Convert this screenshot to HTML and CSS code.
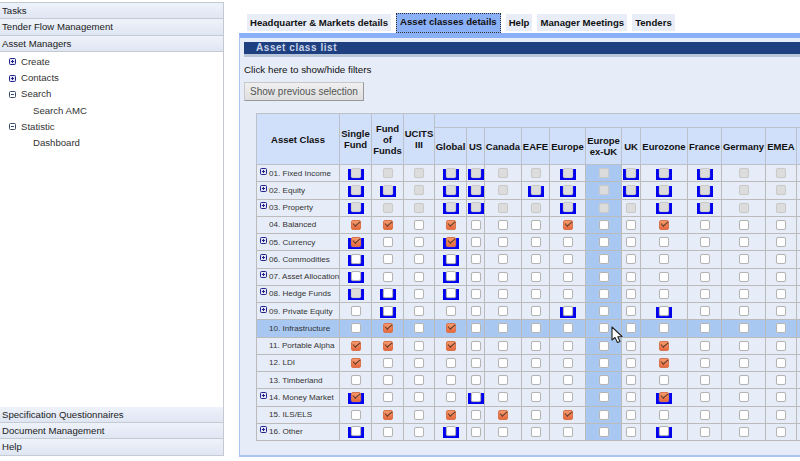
FILE: index.html
```html
<!DOCTYPE html>
<html lang="en">
<head>
<meta charset="utf-8">
<title>Asset class list</title>
<link rel="stylesheet" href="styles.css">
</head>
<body>
<div class="app">
  <aside class="side">
    <div class="acc">Tasks</div>
    <div class="acc">Tender Flow Management</div>
    <div class="acc">Asset Managers</div>
    <ul class="tree">
      <li><i class="tg plus"></i>Create</li>
      <li><i class="tg plus"></i>Contacts</li>
      <li><i class="tg minus"></i>Search</li>
      <li class="sub">Search AMC</li>
      <li><i class="tg minus"></i>Statistic</li>
      <li class="sub">Dashboard</li>
    </ul>
    <div class="acc">Specification Questionnaires</div>
    <div class="acc">Document Management</div>
    <div class="acc">Help</div>
  </aside>
  <main class="main">
    <nav class="tabs">
      <span class="tab">Headquarter &amp; Markets details</span>
      <span class="tab on">Asset classes details</span>
      <span class="tab">Help</span>
      <span class="tab">Manager Meetings</span>
      <span class="tab">Tenders</span>
    </nav>
    <section class="panel">
      <h1 class="title">Asset class list</h1>
      <p class="filters">Click here to show/hide filters</p>
      <button class="btn" type="button">Show previous selection</button>
      <table class="grid">
        <colgroup>
          <col class="w0"><col class="w1"><col class="w2"><col class="w3"><col class="w4"><col class="w5"><col class="w6"><col class="w7"><col class="w8"><col class="w9"><col class="w10"><col class="w11"><col class="w12"><col class="w13"><col class="w14"><col class="w15">
        </colgroup>
        <thead>
          <tr class="h1">
            <th rowspan="2">Asset Class</th>
            <th rowspan="2">Single<br>Fund</th>
            <th rowspan="2">Fund<br>of<br>Funds</th>
            <th rowspan="2">UCITS<br>III</th>
            <th colspan="12" class="group"></th>
          </tr>
          <tr class="h2">
            <th>Global</th><th>US</th><th>Canada</th><th>EAFE</th><th>Europe</th><th>Europe<br>ex-UK</th><th>UK</th><th>Eurozone</th><th>France</th><th>Germany</th><th>EMEA</th><th>Asia<br>Pacific</th>
          </tr>
        </thead>
        <tbody>
          <tr><td class="n"><i class="tg plus"></i>01. Fixed Income</td><td><b class="u"><i class="c d"></i></b></td><td><i class="c d"></i></td><td><i class="c d"></i></td><td><b class="u"><i class="c d"></i></b></td><td><b class="u"><i class="c d"></i></b></td><td><i class="c d"></i></td><td><i class="c d"></i></td><td><b class="u"><i class="c d"></i></b></td><td class="hl"><i class="c d"></i></td><td><b class="u"><i class="c d"></i></b></td><td><b class="u"><i class="c d"></i></b></td><td><b class="u"><i class="c d"></i></b></td><td><i class="c d"></i></td><td><i class="c d"></i></td><td><i class="c d"></i></td></tr>
          <tr><td class="n"><i class="tg plus"></i>02. Equity</td><td><b class="u"><i class="c d"></i></b></td><td><b class="u"><i class="c d"></i></b></td><td><i class="c d"></i></td><td><b class="u"><i class="c d"></i></b></td><td><b class="u"><i class="c d"></i></b></td><td><i class="c d"></i></td><td><b class="u"><i class="c d"></i></b></td><td><b class="u"><i class="c d"></i></b></td><td class="hl"><i class="c d"></i></td><td><b class="u"><i class="c d"></i></b></td><td><b class="u"><i class="c d"></i></b></td><td><b class="u"><i class="c d"></i></b></td><td><i class="c d"></i></td><td><i class="c d"></i></td><td><i class="c d"></i></td></tr>
          <tr><td class="n"><i class="tg plus"></i>03. Property</td><td><b class="u"><i class="c d"></i></b></td><td><i class="c d"></i></td><td><i class="c d"></i></td><td><b class="u"><i class="c d"></i></b></td><td><b class="u"><i class="c d"></i></b></td><td><i class="c d"></i></td><td><i class="c d"></i></td><td><b class="u"><i class="c d"></i></b></td><td class="hl"><i class="c d"></i></td><td><i class="c d"></i></td><td><b class="u"><i class="c d"></i></b></td><td><b class="u"><i class="c d"></i></b></td><td><i class="c d"></i></td><td><i class="c d"></i></td><td><i class="c d"></i></td></tr>
          <tr><td class="n">04. Balanced</td><td><i class="c k"></i></td><td><i class="c k"></i></td><td><i class="c"></i></td><td><i class="c k"></i></td><td><i class="c"></i></td><td><i class="c"></i></td><td><i class="c"></i></td><td><i class="c k"></i></td><td class="hl"><i class="c"></i></td><td><i class="c"></i></td><td><i class="c k"></i></td><td><i class="c"></i></td><td><i class="c"></i></td><td><i class="c"></i></td><td><i class="c"></i></td></tr>
          <tr><td class="n"><i class="tg plus"></i>05. Currency</td><td><b class="u"><i class="c k"></i></b></td><td><i class="c"></i></td><td><i class="c"></i></td><td><b class="u"><i class="c k"></i></b></td><td><i class="c"></i></td><td><i class="c"></i></td><td><i class="c"></i></td><td><i class="c"></i></td><td class="hl"><i class="c"></i></td><td><i class="c"></i></td><td><i class="c"></i></td><td><i class="c"></i></td><td><i class="c"></i></td><td><i class="c"></i></td><td><i class="c"></i></td></tr>
          <tr><td class="n"><i class="tg plus"></i>06. Commodities</td><td><b class="u"><i class="c"></i></b></td><td><i class="c"></i></td><td><i class="c"></i></td><td><b class="u"><i class="c"></i></b></td><td><i class="c"></i></td><td><i class="c"></i></td><td><i class="c"></i></td><td><i class="c"></i></td><td class="hl"><i class="c"></i></td><td><i class="c"></i></td><td><i class="c"></i></td><td><i class="c"></i></td><td><i class="c"></i></td><td><i class="c"></i></td><td><i class="c"></i></td></tr>
          <tr><td class="n"><i class="tg plus"></i>07. Asset Allocation</td><td><b class="u"><i class="c"></i></b></td><td><i class="c"></i></td><td><i class="c"></i></td><td><b class="u"><i class="c"></i></b></td><td><i class="c"></i></td><td><i class="c"></i></td><td><i class="c"></i></td><td><i class="c"></i></td><td class="hl"><i class="c"></i></td><td><i class="c"></i></td><td><i class="c"></i></td><td><i class="c"></i></td><td><i class="c"></i></td><td><i class="c"></i></td><td><i class="c"></i></td></tr>
          <tr><td class="n"><i class="tg plus"></i>08. Hedge Funds</td><td><b class="u"><i class="c d"></i></b></td><td><b class="u"><i class="c"></i></b></td><td><i class="c"></i></td><td><b class="u"><i class="c"></i></b></td><td><i class="c"></i></td><td><i class="c"></i></td><td><i class="c"></i></td><td><i class="c"></i></td><td class="hl"><i class="c"></i></td><td><i class="c"></i></td><td><i class="c"></i></td><td><i class="c"></i></td><td><i class="c"></i></td><td><i class="c"></i></td><td><i class="c"></i></td></tr>
          <tr><td class="n"><i class="tg plus"></i>09. Private Equity</td><td><i class="c"></i></td><td><b class="u"><i class="c"></i></b></td><td><i class="c"></i></td><td><i class="c"></i></td><td><i class="c"></i></td><td><i class="c"></i></td><td><i class="c"></i></td><td><b class="u"><i class="c"></i></b></td><td class="hl"><i class="c"></i></td><td><i class="c"></i></td><td><b class="u"><i class="c"></i></b></td><td><i class="c"></i></td><td><i class="c"></i></td><td><i class="c"></i></td><td><i class="c"></i></td></tr>
          <tr class="rowhl"><td class="n">10. Infrastructure</td><td><i class="c"></i></td><td><i class="c k"></i></td><td><i class="c"></i></td><td><i class="c k"></i></td><td><i class="c"></i></td><td><i class="c"></i></td><td><i class="c"></i></td><td><i class="c"></i></td><td class="hl"><i class="c"></i></td><td><i class="c"></i></td><td><i class="c"></i></td><td><i class="c"></i></td><td><i class="c"></i></td><td><i class="c"></i></td><td><i class="c"></i></td></tr>
          <tr><td class="n">11. Portable Alpha</td><td><i class="c k"></i></td><td><i class="c k"></i></td><td><i class="c"></i></td><td><i class="c k"></i></td><td><i class="c"></i></td><td><i class="c"></i></td><td><i class="c"></i></td><td><i class="c"></i></td><td class="hl"><i class="c"></i></td><td><i class="c"></i></td><td><i class="c k"></i></td><td><i class="c"></i></td><td><i class="c"></i></td><td><i class="c"></i></td><td><i class="c"></i></td></tr>
          <tr><td class="n">12. LDI</td><td><i class="c k"></i></td><td><i class="c"></i></td><td><i class="c"></i></td><td><i class="c"></i></td><td><i class="c"></i></td><td><i class="c"></i></td><td><i class="c"></i></td><td><i class="c"></i></td><td class="hl"><i class="c"></i></td><td><i class="c"></i></td><td><i class="c k"></i></td><td><i class="c"></i></td><td><i class="c"></i></td><td><i class="c"></i></td><td><i class="c"></i></td></tr>
          <tr><td class="n">13. Timberland</td><td><i class="c"></i></td><td><i class="c"></i></td><td><i class="c"></i></td><td><i class="c"></i></td><td><i class="c"></i></td><td><i class="c"></i></td><td><i class="c"></i></td><td><i class="c"></i></td><td class="hl"><i class="c"></i></td><td><i class="c"></i></td><td><i class="c"></i></td><td><i class="c"></i></td><td><i class="c"></i></td><td><i class="c"></i></td><td><i class="c"></i></td></tr>
          <tr><td class="n"><i class="tg plus"></i>14. Money Market</td><td><b class="u"><i class="c k"></i></b></td><td><i class="c"></i></td><td><i class="c"></i></td><td><i class="c"></i></td><td><b class="u"><i class="c"></i></b></td><td><i class="c"></i></td><td><i class="c"></i></td><td><i class="c"></i></td><td class="hl"><i class="c"></i></td><td><i class="c"></i></td><td><b class="u"><i class="c k"></i></b></td><td><i class="c"></i></td><td><i class="c"></i></td><td><i class="c"></i></td><td><i class="c"></i></td></tr>
          <tr><td class="n">15. ILS/ELS</td><td><i class="c"></i></td><td><i class="c k"></i></td><td><i class="c"></i></td><td><i class="c k"></i></td><td><i class="c"></i></td><td><i class="c k"></i></td><td><i class="c"></i></td><td><i class="c k"></i></td><td class="hl"><i class="c"></i></td><td><i class="c"></i></td><td><i class="c"></i></td><td><i class="c"></i></td><td><i class="c"></i></td><td><i class="c"></i></td><td><i class="c"></i></td></tr>
          <tr><td class="n"><i class="tg plus"></i>16. Other</td><td><b class="u"><i class="c"></i></b></td><td><i class="c"></i></td><td><i class="c"></i></td><td><b class="u"><i class="c"></i></b></td><td><i class="c"></i></td><td><i class="c"></i></td><td><i class="c"></i></td><td><i class="c"></i></td><td class="hl"><i class="c"></i></td><td><i class="c"></i></td><td><b class="u"><i class="c"></i></b></td><td><i class="c"></i></td><td><i class="c"></i></td><td><i class="c"></i></td><td><i class="c"></i></td></tr>
        </tbody>
      </table>
    </section>
  </main>
</div>
<svg class="cursor" width="13" height="18" viewBox="0 0 13 18" aria-hidden="true"><path d="M1 1 L1 14 L4 11.500 L6.500 16.500 L9 15.500 L6.800 10.800 L11 10.500 Z" fill="#fff" stroke="#222" stroke-width="1.100" stroke-linejoin="round"/></svg>
</body>
</html>
```

FILE: styles.css
```css
* { box-sizing: border-box; }
html, body { margin: 0; height: 100%; overflow: hidden; background: #fff; }
body { font-family: "Liberation Sans", Arial, sans-serif; font-size: 10px; color: #222; }
.app { display: flex; height: 461px; width: 800px; }

.side { width: 224px; flex: none; height: 453.500px; margin-top: 2px; display: flex; flex-direction: column; border-right: 1px solid #c4c8cf; border-top: 1px solid #c4c8cf; }
.acc { height: 16.300px; line-height: 15px; padding-left: 2px; font-size: 9.600px; color: #222; background: linear-gradient(#eef2fa, #dfe6f3); border-bottom: 1px solid #c6cad2; flex: none; }
.tree { list-style: none; margin: 0; padding: 2px 0 0 9px; flex: 1; }
.tree li { height: 16.200px; line-height: 16px; font-size: 9.600px; display: flex; align-items: center; color: #333; }
.tree li.sub { padding-left: 24px; }
.tg { display: inline-block; width: 7px; height: 7px; border: 1px solid #22228a; border-radius: 1.500px; margin-right: 5px; flex: none; }
.tg.plus { background: linear-gradient(#22228a, #22228a) center / 3px 1px no-repeat, linear-gradient(#22228a, #22228a) center / 1px 3px no-repeat, #e4e8f6; }
.tg.minus { border-color: #3a4a6a; background: linear-gradient(#3a4a6a, #3a4a6a) center / 3px 1px no-repeat; }

.main { flex: 1; min-width: 0; padding: 14px 0 4px 15px; display: flex; flex-direction: column; }
.tabs { display: flex; gap: 5px; padding-left: 8px; height: 19px; align-items: flex-start; }
.tab { height: 17px; line-height: 17px; padding: 0 3px; font-weight: bold; font-size: 9.600px; color: #111; background: #e8edf8; }
.tab.on { height: 20px; margin: -1px 0 0; padding: 0 4px; line-height: 18px; background: #8ab0f8; outline: 1px dotted #333; outline-offset: -1px; }
.panel { flex: 1; overflow: hidden; background: #e7edf8; border-top: 5px solid #8ab0f8; border-left: 1px solid #a9c4ee; border-bottom: 2px solid #a9c4ee; padding: 4px 0 0 4px; }
.title { margin: 0; height: 15px; background: #1f4080; border-bottom: 3px solid #b9c6d8; color: #c6d3e8; font-size: 10px; line-height: 12px; letter-spacing: .55px; padding-left: 12px; }
.filters { margin: 7px 0 0; font-size: 9.800px; line-height: 12px; color: #111; }
.btn { display: block; margin: 6px 0 0; width: 120px; height: 19px; padding: 0; font: 10px "Liberation Sans", Arial, sans-serif; color: #555; background: linear-gradient(#f0f0f0, #dedede); border: 1px solid #c8c8c8; border-right-color: #999; border-bottom-color: #999; }

.grid { table-layout: fixed; width: 584px; margin: 12px 0 0 12px; border-collapse: collapse; }
.w0 { width: 83px; } .w1 { width: 32px; } .w2 { width: 32px; } .w3 { width: 31px; } .w4 { width: 32px; } .w5 { width: 18px; } .w6 { width: 37px; } .w7 { width: 28px; } .w8 { width: 36px; } .w9 { width: 36px; } .w10 { width: 19px; } .w11 { width: 47px; } .w12 { width: 34px; } .w13 { width: 44px; } .w14 { width: 31px; } .w15 { width: 44px; }
.grid th { background: #d0dffa; border: 1px solid #bcc0c8; padding: 0; font-size: 9.500px; line-height: 11px; font-weight: bold; color: #111; text-align: center; white-space: nowrap; overflow: hidden; }
.h1 { height: 14px; }
.h2 { height: 37px; }
.grid td { height: 17.250px; padding: 0; border: 1px solid #bbb; border-top-color: #c2c2c2; text-align: center; background: #e7edf8; line-height: 0; }
.grid td.n { text-align: left; padding-left: 3px; font-size: 8.100px; line-height: 11px; color: #333; white-space: nowrap; }
.grid td.n .tg { margin-right: 2px; vertical-align: 1px; }
.grid td.n:not(:has(.tg)) { padding-left: 12px; }
.grid td.hl, .rowhl td { background: #a8c8f2; }

.c { display: inline-block; width: 10px; height: 10px; border: 1px solid #b4b4b4; border-radius: 2px; background: #fff; vertical-align: middle; box-shadow: 0 0 1px #d8d8d8; }
.c.d { background: #dcdcdc; border-color: #cacaca; }
.c.k { position: relative; background: linear-gradient(#f59a6c, #e8683e); border-color: #d8744c; }
.c.k::after { content: ""; position: absolute; left: 1px; top: 0; width: 6px; height: 3px; border-left: 1px solid #55392c; border-bottom: 1px solid #55392c; transform: rotate(-42deg); }
.u { display: inline-flex; justify-content: center; align-items: flex-start; width: 16px; height: 11px; background: #0000ee; vertical-align: middle; position: relative; top: 1px; }
.u .c { margin-top: -1px; }
.cursor { position: absolute; left: 611px; top: 326px; }
```
